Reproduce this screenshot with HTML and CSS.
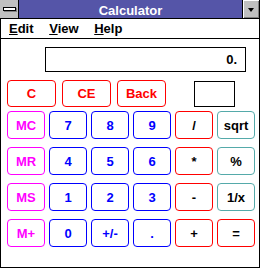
FILE: index.html
```html
<!DOCTYPE html>
<html lang="en">
<head>
<title>Calculator</title>
<link rel="stylesheet" href="styles.css">
</head>
<body>
<div class="window">
  <div class="titlebar">
    <div class="sysbox"><div class="sysbar"></div></div>
    <div class="title">Calculator</div>
    <div class="minbtn"><div class="arrow"></div></div>
  </div>
  <div class="menubar">
    <span class="menu"><u>E</u>dit</span>
    <span class="menu"><u>V</u>iew</span>
    <span class="menu"><u>H</u>elp</span>
  </div>
  <div class="client">
    <div class="display">0.</div>
    <div class="toprow">
      <div class="key wide red">C</div>
      <div class="key wide red">CE</div>
      <div class="key wide red">Back</div>
      <div class="membox"></div>
    </div>
    <div class="keys">
      <div class="key mag">MC</div>
      <div class="key blue">7</div>
      <div class="key blue">8</div>
      <div class="key blue">9</div>
      <div class="key op">/</div>
      <div class="key fn">sqrt</div>

      <div class="key mag">MR</div>
      <div class="key blue">4</div>
      <div class="key blue">5</div>
      <div class="key blue">6</div>
      <div class="key op">*</div>
      <div class="key fn">%</div>

      <div class="key mag">MS</div>
      <div class="key blue">1</div>
      <div class="key blue">2</div>
      <div class="key blue">3</div>
      <div class="key op">-</div>
      <div class="key fn">1/x</div>

      <div class="key mag">M+</div>
      <div class="key blue">0</div>
      <div class="key blue">+/-</div>
      <div class="key blue">.</div>
      <div class="key op">+</div>
      <div class="key op">=</div>
    </div>
  </div>
</div>
</body>
</html>
```

FILE: styles.css
```css
body {
  margin: 0;
  background: #fff;
  font-family: "Liberation Sans", Arial, sans-serif;
  font-weight: bold;
  font-size: 13px;
}
.window {
  width: 260px;
  height: 268px;
  box-sizing: border-box;
  border: 1px solid #000;
  border-top: none;
}
.titlebar {
  display: flex;
  height: 19px;
  margin-left: -1px;
  box-sizing: border-box;
  border-bottom: 1px solid #000;
  background: #5555a8;
}
.sysbox {
  width: 19px;
  border-right: 1px solid #000;
  background: #c0c0c0;
  padding: 7px 0 0 3px;
  box-sizing: border-box;
}
.sysbar {
  width: 11px;
  height: 2px;
  background: #fff;
  border: 1px solid #000;
  box-shadow: 1px 1px 0 #808080;
}
.title {
  flex: 1;
  color: #fff;
  text-align: center;
  line-height: 21px;
  height: 18px;
  overflow: hidden;
}
.minbtn {
  width: 17px;
  border-left: 1px solid #000;
  background: #c0c0c0;
  box-sizing: content-box;
  box-shadow: inset 1px 1px 0 #fff, inset -1px -1px 0 #808080;
  display: flex;
  justify-content: center;
  padding-top: 8px;
  box-sizing: border-box;
}
.arrow {
  width: 0;
  height: 0;
  border-left: 3px solid transparent;
  border-right: 3px solid transparent;
  border-top: 4px solid #000;
}
.menubar {
  height: 20px;
  box-sizing: border-box;
  border-bottom: 1px solid #000;
  line-height: 19px;
  color: #000;
}
.menu {
  padding: 0 8px;
}
.menu + .menu {
  margin-left: -4px;
}
.client {
  padding: 8px 0 0 6px;
}
.display {
  margin-left: 38px;
  width: 201px;
  height: 25px;
  box-sizing: border-box;
  border: 1px solid #000;
  text-align: right;
  padding-right: 8px;
  line-height: 24px;
}
.toprow {
  display: flex;
  align-items: flex-start;
  gap: 6px;
  margin-top: 8px;
}
.key {
  box-sizing: border-box;
  width: 38px;
  height: 28px;
  border: 1px solid;
  border-radius: 4px;
  display: flex;
  align-items: center;
  justify-content: center;
  background: #fff;
}
.key.wide {
  width: 49px;
  height: 27px;
}
.membox {
  width: 41px;
  height: 26px;
  box-sizing: border-box;
  border: 1px solid #000;
  margin: 1px 0 0 22px;
}
.keys {
  display: grid;
  grid-template-columns: repeat(6, 38px);
  column-gap: 4px;
  row-gap: 8px;
  margin-top: 4px;
}
.red { color: #f00; border-color: #f00; }
.mag { color: #f0f; border-color: #f0f; }
.blue { color: #00f; border-color: #00f; }
.op { color: #000; border-color: #f00; }
.fn { color: #000; border-color: #55aaaa; }
```
